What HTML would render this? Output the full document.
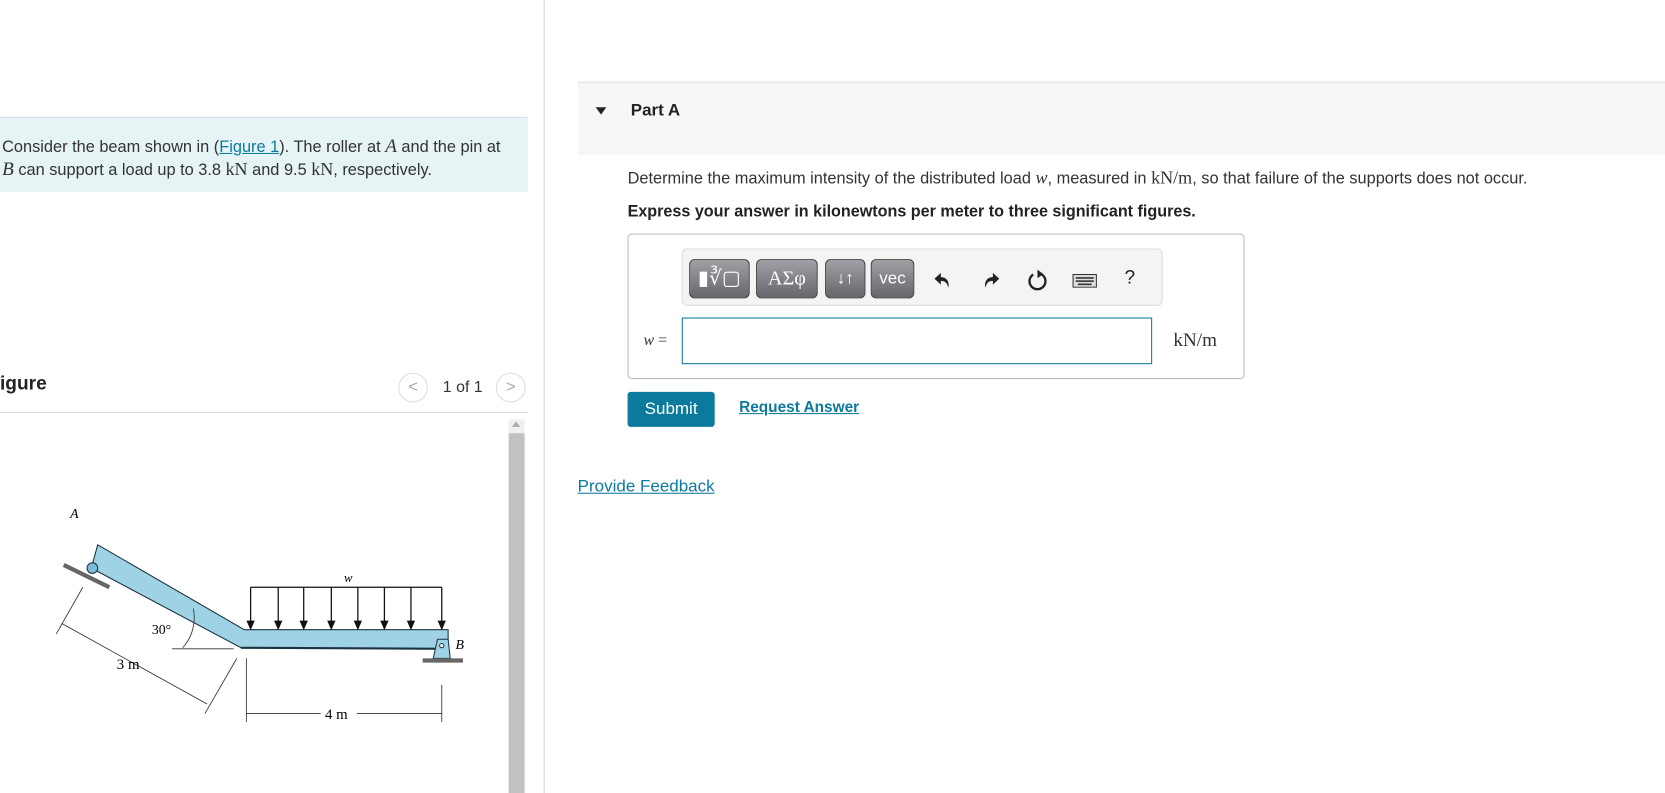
<!DOCTYPE html>
<html><head><meta charset="utf-8"><style>
body{margin:0;width:1665px;height:747px;background:#fff;font-family:"Liberation Sans",sans-serif;color:#333;overflow:hidden}
#w{position:absolute;left:0;top:0;width:1568px;height:704px;transform:scale(1.0619);transform-origin:0 0}
.abs{position:absolute}
.m{font-family:"Liberation Serif",serif}
a{color:#0e7a9e}
.tb{position:absolute;top:9px;height:37px;border-radius:5px;background:linear-gradient(#a0a0a5,#66666c);border:1px solid #444;color:#fff;font-size:19px;text-align:center;line-height:36px;box-sizing:border-box}
.ic{position:absolute;top:20px}
</style></head><body><div id="w">
<div class="abs" style="left:0;top:110px;width:497px;height:70px;background:#e6f4f5;border-top:1px solid #d6e0e0"></div>
<div class="abs" style="left:2px;top:127px;font-size:15.4px;line-height:20px;width:500px;white-space:nowrap">Consider the beam shown in (<a href="#">Figure 1</a>). The roller at <i class="m" style="font-size:18px">A</i> and the pin at<br><i class="m" style="font-size:18px">B</i> can support a load up to 3.8 <span class="m" style="font-size:17px">kN</span> and 9.5 <span class="m" style="font-size:17px">kN</span>, respectively.</div>
<div class="abs" style="left:512px;top:0;width:1px;height:747px;background:#c8d6e0"></div>
<div class="abs" style="left:0;top:351px;font-size:18px;font-weight:bold;color:#222">igure</div>
<div class="abs" style="left:375px;top:351px;width:28px;height:28px;border:1px solid #ddd;border-radius:50%;text-align:center;line-height:26px;color:#aaa;box-sizing:border-box">&lt;</div>
<div class="abs" style="left:417px;top:356px;font-size:15px">1 of 1</div>
<div class="abs" style="left:467px;top:351px;width:28px;height:28px;border:1px solid #ddd;border-radius:50%;text-align:center;line-height:26px;color:#aaa;box-sizing:border-box">&gt;</div>
<div class="abs" style="left:0;top:388px;width:497px;height:1px;background:#ddd"></div>
<div class="abs" style="left:479px;top:395px;width:15px;height:352px;background:#f0f0f0"></div>
<div class="abs" style="left:482px;top:397px;width:0;height:0;border-left:4px solid transparent;border-right:4px solid transparent;border-bottom:5px solid #aaa"></div>
<div class="abs" style="left:479px;top:408px;width:15px;height:339px;background:#c1c1c1"></div>
<svg class="abs" style="left:0;top:0" width="480" height="704" viewBox="0 0 480 704">
<text x="66" y="488" font-family="Liberation Serif" font-style="italic" font-size="13">A</text>
<polygon points="92,513 86,535 227,610 422,611 422,593 230,593" fill="#9fd2e4" stroke="#1a3340" stroke-width="1"/>
<line x1="227" y1="610" x2="422" y2="611" stroke="#1a3340" stroke-width="2"/>
<line x1="60" y1="532" x2="103" y2="553" stroke="#666" stroke-width="4"/>
<circle cx="87" cy="535" r="5" fill="#7bbcd8" stroke="#234"/>
<g stroke="#111" stroke-width="1.2" fill="#111">
<line x1="236" y1="553" x2="416" y2="553"/>
<line x1="236" y1="553" x2="236" y2="586"/><polygon points="233,585 239,585 236,592"/>
<line x1="262" y1="553" x2="262" y2="586"/><polygon points="259,585 265,585 262,592"/>
<line x1="286" y1="553" x2="286" y2="586"/><polygon points="283,585 289,585 286,592"/>
<line x1="312" y1="553" x2="312" y2="586"/><polygon points="309,585 315,585 312,592"/>
<line x1="337" y1="553" x2="337" y2="586"/><polygon points="334,585 340,585 337,592"/>
<line x1="362" y1="553" x2="362" y2="586"/><polygon points="359,585 365,585 362,592"/>
<line x1="387" y1="553" x2="387" y2="586"/><polygon points="384,585 390,585 387,592"/>
<line x1="416" y1="553" x2="416" y2="586"/><polygon points="413,585 419,585 416,592"/>
</g>
<text x="324" y="548" font-family="Liberation Serif" font-style="italic" font-size="12">w</text>
<polygon points="412,602 422,602 424,620 408,620" fill="#9fd2e4" stroke="#234"/>
<circle cx="416" cy="608" r="2" fill="#fff" stroke="#234"/>
<line x1="398" y1="622" x2="436" y2="622" stroke="#666" stroke-width="4"/>
<text x="429" y="611" font-family="Liberation Serif" font-style="italic" font-size="13">B</text>
<g stroke="#333" stroke-width="0.8" fill="none">
<line x1="78" y1="553" x2="53" y2="597"/>
<line x1="58" y1="587" x2="195" y2="663"/>
<line x1="223" y1="620" x2="193" y2="672"/>
<line x1="162" y1="611" x2="220" y2="611"/>
<path d="M172,610 A42,42 0 0 0 182,573"/>
<line x1="232" y1="620" x2="232" y2="680"/>
<line x1="416" y1="645" x2="416" y2="680"/>
<line x1="232" y1="672" x2="302" y2="672"/><line x1="336" y1="672" x2="416" y2="672"/>
</g>
<text x="143" y="597" font-family="Liberation Serif" font-size="13">30°</text>
<text x="110" y="630" font-family="Liberation Serif" font-size="14">3 m</text>
<text x="306" y="677" font-family="Liberation Serif" font-size="14">4 m</text>
</svg>
<div class="abs" style="left:544px;top:77px;width:1100px;height:68px;background:#f7f7f7;border-top:1px solid #e0e0e0"></div>
<div class="abs" style="left:561px;top:101px;width:0;height:0;border-left:5px solid transparent;border-right:5px solid transparent;border-top:7px solid #222"></div>
<div class="abs" style="left:594px;top:96px;font-size:16px;font-weight:bold;color:#222">Part A</div>
<div class="abs" style="left:591px;top:158px;font-size:15.4px;white-space:nowrap">Determine the maximum intensity of the distributed load <i class="m" style="font-size:17px">w</i>, measured in <span class="m" style="font-size:17px">kN/m</span>, so that failure of the supports does not occur.</div>
<div class="abs" style="left:591px;top:191px;font-size:15.2px;font-weight:bold;color:#222;white-space:nowrap">Express your answer in kilonewtons per meter to three significant figures.</div>
<div class="abs" style="left:591px;top:220px;width:581px;height:137px;border:1px solid #bbb;border-radius:4px;box-sizing:border-box">
 <div class="abs" style="left:50px;top:13px;width:453px;height:54px;background:#f4f4f4;border:1px solid #ddd;border-radius:5px;box-sizing:border-box">
  <div class="tb" style="left:6px;width:57px">▮∛▢</div>
  <div class="tb m" style="left:69px;width:58px">ΑΣφ</div>
  <div class="tb" style="left:134px;width:38px;font-size:16px">↓↑</div>
  <div class="tb" style="left:177px;width:41px;font-size:16px">vec</div>
  <svg class="ic" style="left:236px" width="18" height="18" viewBox="0 0 18 18"><path d="M7 2 L1 7.5 L7 13 V9.5 C11 9.5 13 11.5 14 16 C15.5 10 12 6 7 6 Z" fill="#222"/></svg>
  <svg class="ic" style="left:281px" width="18" height="18" viewBox="0 0 18 18"><path d="M11 2 L17 7.5 L11 13 V9.5 C7 9.5 5 11.5 4 16 C2.5 10 6 6 11 6 Z" fill="#222"/></svg>
  <svg class="ic" style="left:324px;top:18px" width="20" height="22" viewBox="0 0 20 22"><path d="M14 5.5 A7.5 7.5 0 1 1 6 5.5" fill="none" stroke="#222" stroke-width="2.2"/><path d="M10 1 L15.5 5 L10 9 Z" fill="#222"/></svg>
  <svg class="ic" style="left:367px;top:23px" width="23" height="13" viewBox="0 0 23 13"><rect x="0.5" y="0.5" width="22" height="12" fill="#ddd" stroke="#333"/><g fill="#333"><rect x="3" y="3" width="17" height="1.5"/><rect x="3" y="6" width="17" height="1.5"/><rect x="5" y="9" width="13" height="1.5"/></g></svg>
  <div class="abs" style="left:416px;top:16px;font-size:18px;color:#222">?</div>
 </div>
 <div class="abs m" style="left:14px;top:92px;font-size:15px;font-style:italic">w <span style="font-style:normal">=</span></div>
 <div class="abs" style="left:50px;top:78px;width:443px;height:44px;border:1px solid #0e7a9e;box-sizing:border-box"></div>
 <div class="abs m" style="left:513px;top:89px;font-size:18px">kN/m</div>
</div>
<div class="abs" style="left:591px;top:369px;width:82px;height:33px;background:#0b7a9d;border-radius:3px;color:#fff;font-size:16px;line-height:33px;text-align:center">Submit</div>
<div class="abs" style="left:696px;top:376px;font-size:14.5px"><a href="#" style="font-weight:bold">Request Answer</a></div>
<div class="abs" style="left:544px;top:450px;font-size:16px"><a href="#">Provide Feedback</a></div>
</div></body></html>
